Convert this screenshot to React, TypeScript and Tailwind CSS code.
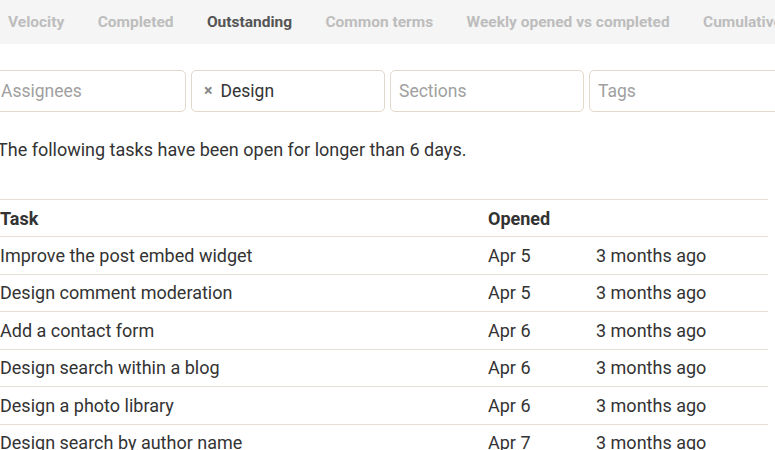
import React from "react";

const tabs = [
    { label: "Velocity" },
    { label: "Completed" },
    { label: "Outstanding", active: true },
    { label: "Common terms" },
    { label: "Weekly opened vs completed" },
    { label: "Cumulative flow" },
];

const rows = [
    { task: "Improve the post embed widget", opened: "Apr 5", ago: "3 months ago" },
    { task: "Design comment moderation", opened: "Apr 5", ago: "3 months ago" },
    { task: "Add a contact form", opened: "Apr 6", ago: "3 months ago" },
    { task: "Design search within a blog", opened: "Apr 6", ago: "3 months ago" },
    { task: "Design a photo library", opened: "Apr 6", ago: "3 months ago" },
    { task: "Design search by author name", opened: "Apr 7", ago: "3 months ago" },
    { task: "Design tag pages", opened: "Apr 7", ago: "3 months ago" },
];

/* ---------- filter box ---------- */
function Filter({ placeholder, value }: { placeholder?: string; value?: string }) {
    return (
        <div className="w-[194px] h-[42px] shrink-0 flex items-center px-2 border border-[#e3d9cc] rounded-[5px] bg-white text-[17.5px]">
            {value ? (
                <span className="flex items-center gap-[8px] ml-[4px] text-[#333]">
                    <span className="text-[#888] text-[16px] font-bold">×</span>
                    {value}
                </span>
            ) : (
                <span className="text-[#a0a0a0]">{placeholder}</span>
            )}
        </div>
    );
}

export default function App() {
    return (
        <div className="w-[775px] h-[450px] overflow-hidden bg-white font-['Roboto',sans-serif]">
            {/* tabs */}
            <div className="h-[44px] bg-[#f5f5f5] flex items-center pt-[1px] pl-2 gap-[33.4px] whitespace-nowrap text-[15.5px] font-bold">
                {tabs.map((t) => (
                    <span key={t.label} className={t.active ? "text-[#555]" : "text-[#bdbdbd]"}>
                        {t.label}
                    </span>
                ))}
            </div>

            {/* filters */}
            <div className="flex gap-[5px] -ml-2 mt-[26px]">
                <Filter placeholder="Assignees" />
                <Filter value="Design" />
                <Filter placeholder="Sections" />
                <Filter placeholder="Tags" />
            </div>

            <p className="-ml-[3px] mt-[24px] text-[18px] leading-[27px] text-[#333] whitespace-nowrap">
                The following tasks have been open for longer than 6 days.
            </p>

            {/* table */}
            <table className="-ml-2 mt-[36px] w-[776px] border-collapse text-[18px] text-[#333] whitespace-nowrap">
                <thead>
                    <tr className="border-t border-b border-[#e6dfd5] h-[37px]">
                        <th className="text-left font-bold px-2 w-[488px]">Task</th>
                        <th className="text-left font-bold px-2 w-[108px]">Opened</th>
                        <th className="px-2"></th>
                    </tr>
                </thead>
                <tbody>
                    {rows.map((r) => (
                        <tr key={r.task} className="border-b border-[#e6dfd5] h-[37.5px]">
                            <td className="px-2">{r.task}</td>
                            <td className="px-2">{r.opened}</td>
                            <td className="px-2">{r.ago}</td>
                        </tr>
                    ))}
                </tbody>
            </table>
        </div>
    );
}
